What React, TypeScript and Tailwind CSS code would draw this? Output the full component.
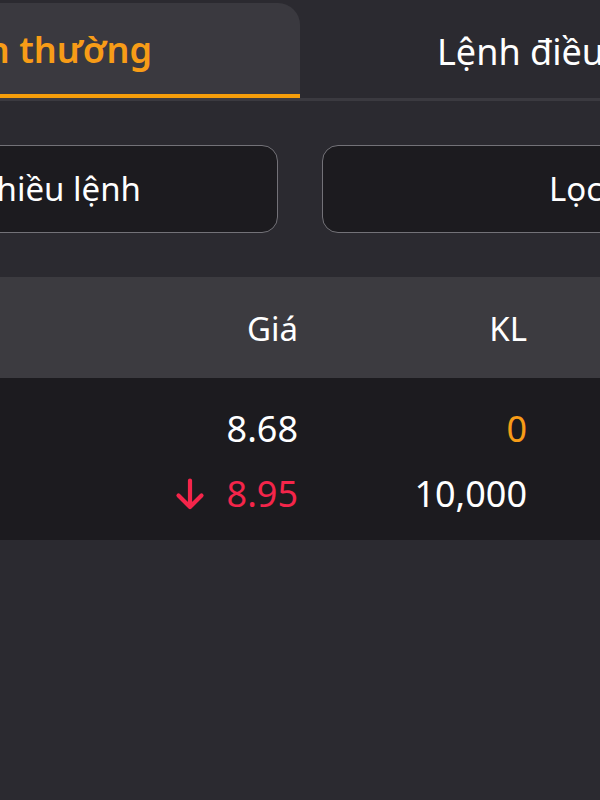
const font = { fontFamily: '"Noto Sans", "Open Sans", sans-serif' };

const rows = [
  { price: "8.68", qty: "0", down: false },
  { price: "8.95", qty: "10,000", down: true },
];

function DownArrow() {
  return (
    <svg width="30" height="32" viewBox="0 0 30 32" fill="none" className="mr-[22px] text-[#f4254a]">
      <path d="M15 2.5v26M3.5 17.5 15 29l11.5-11.5" stroke="currentColor" strokeWidth="4.2" strokeLinecap="round" strokeLinejoin="round" />
    </svg>
  );
}

export default function App() {
  return (
    <div className="w-[600px] h-[800px] overflow-hidden bg-[#2b2a30] text-white" style={font}>
      {/* tabs */}
      <div className="flex pt-[3px] border-b-[3px] border-[#3b3a40]">
        <div className="w-[300px] h-[95px] shrink-0 flex items-center justify-end pr-[148px] pt-[2px] bg-[#3a393f] rounded-tr-[22px] border-b-[4px] border-[#f59e0b] whitespace-nowrap">
          <span className="text-[36px] font-semibold text-[#f79c17]">Lệnh thường</span>
        </div>
        <div className="flex-1 flex items-center pl-[137px] pt-[2px] whitespace-nowrap">
          <span className="text-[36px] text-white">Lệnh điều kiện</span>
        </div>
      </div>

      {/* actions */}
      <div className="flex mt-[44px] whitespace-nowrap">
        <div className="-ml-[40px] w-[318px] h-[88px] shrink-0 flex items-center justify-end pr-[136px] bg-[#1c1b1f] border-[1.5px] border-[#737278] rounded-[16px]">
          <span className="text-[33px]">Nhiều lệnh</span>
        </div>
        <div className="ml-[44px] w-[320px] h-[88px] shrink-0 flex items-center pl-[226px] bg-[#1c1b1f] border-[1.5px] border-[#737278] rounded-[16px]">
          <span className="text-[33px]">Lọc lệnh</span>
        </div>
      </div>

      {/* table */}
      <div className="mt-[44px]">
        <div className="flex items-center h-[101px] pt-[2px] bg-[#3c3b40] text-[33px]">
          <div className="w-[298px] text-right">Giá</div>
          <div className="w-[229px] text-right">KL</div>
        </div>
        <div className="bg-[#1c1b1f] pt-[18px] pb-[14px]">
          {rows.map((r) => (
            <div key={r.price} className="flex items-center h-[65px] text-[36px]">
              <div className="w-[298px] flex items-center justify-end">
                {r.down && <DownArrow />}
                <span className={r.down ? "text-[#f4254a]" : "text-white"}>{r.price}</span>
              </div>
              <div className={r.qty === "0" ? "w-[229px] text-right text-[#f79c17]" : "w-[229px] text-right text-white"}>
                {r.qty}
              </div>
            </div>
          ))}
        </div>
      </div>
    </div>
  );
}
